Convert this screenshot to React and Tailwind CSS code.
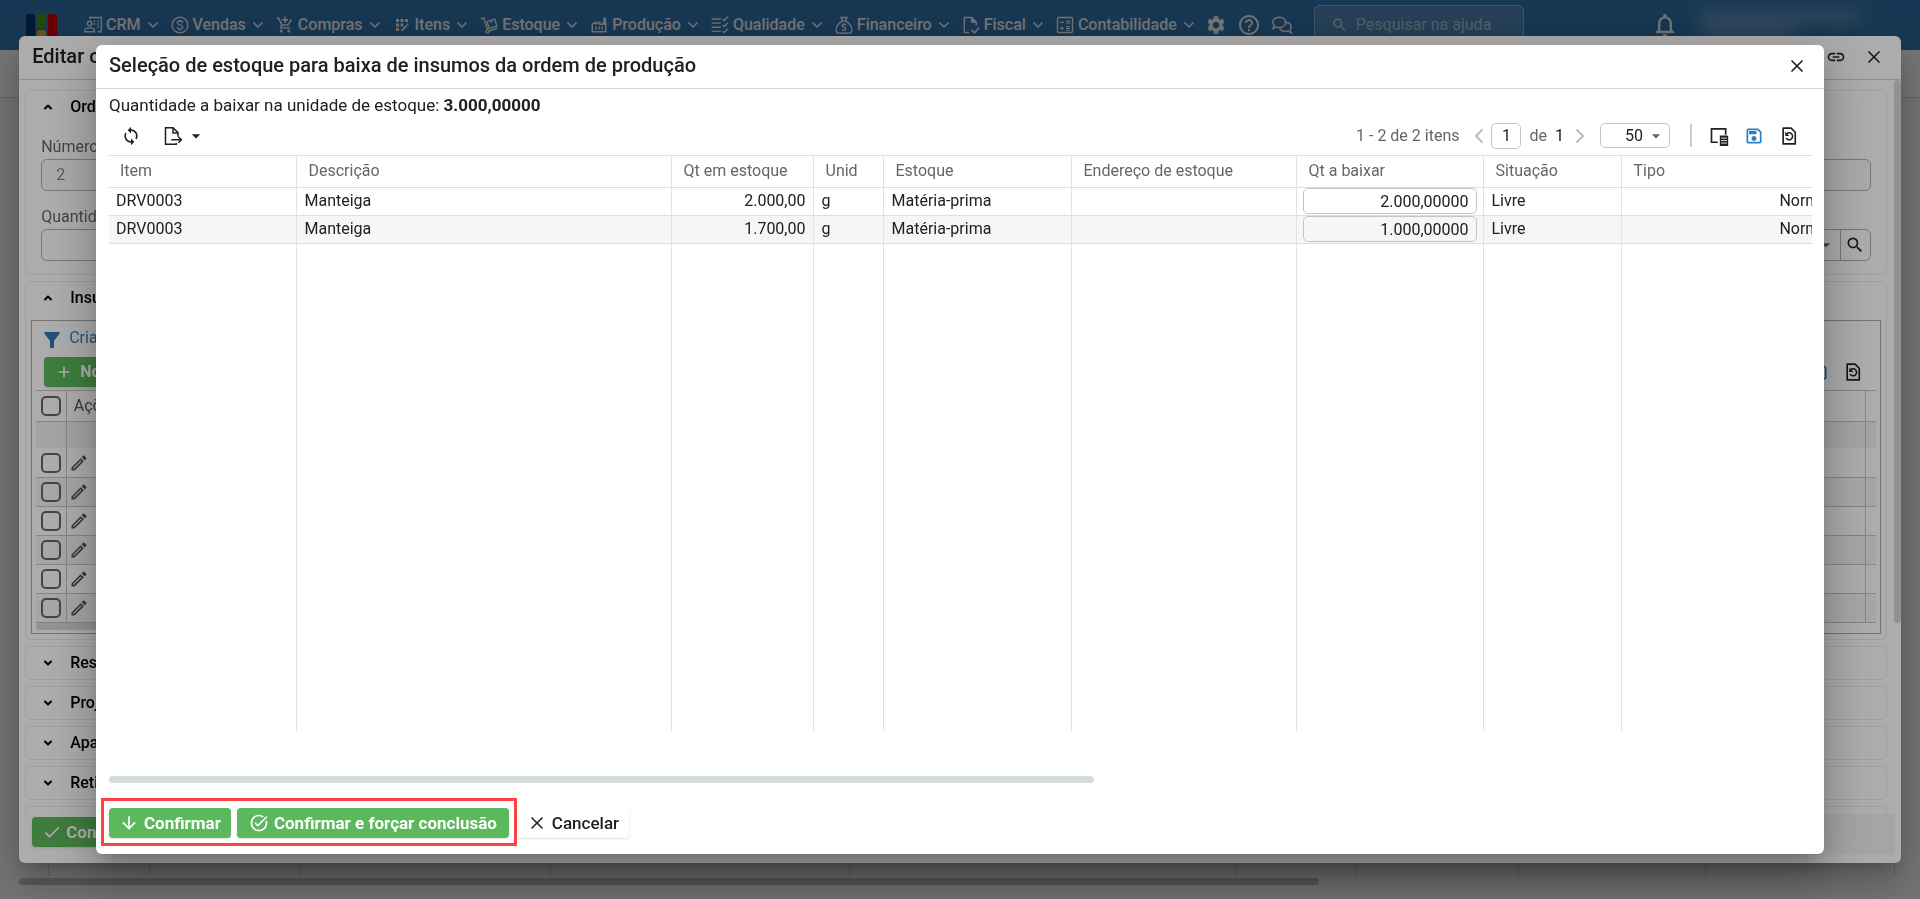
import React from 'react';
import { ChevronDown, ChevronLeft, ChevronRight, ChevronUp, Plus, X } from 'lucide-react';
import {
  MdAppRegistration,
  MdArrowDownward,
  MdArrowDropDown,
  MdCheck,
  MdFilterAlt,
  MdHelpOutline,
  MdLink,
  MdOutlineAddShoppingCart,
  MdOutlineEdit,
  MdOutlineFactory,
  MdOutlineNotifications,
  MdOutlineSave,
  MdSearch,
  MdSettings,
  MdSync,
  MdTaskAlt,
} from 'react-icons/md';

// Icons that are not in the icon packages
const Svg = ({ children, className = 'size-[18px]', width = 1.8 }) => (
  <svg
    viewBox="0 0 24 24"
    className={className}
    fill="none"
    stroke="currentColor"
    strokeWidth={width}
    aria-hidden="true"
  >
    {children}
  </svg>
);

const CrmIcon = () => (
  <Svg>
    <circle cx="7.5" cy="10" r="3" />
    <path d="M1 21v-2.2c0-2 4-3 6.500-3s6.500 1 6.500 3V21z" />
    <path d="M8 4V2h15v19h-5" />
    <path d="M13 6.500h2M17.500 6.500h2M13 10.500h2M17.500 10.500h2M17.500 14.500h2" strokeWidth="2" />
  </Svg>
);

const SalesIcon = () => (
  <Svg>
    <circle cx="12" cy="12" r="10.500" />
    <path d="M15.500 9c0-1.500-1.500-2.300-3.500-2.300S8.500 7.600 8.500 9.300c0 3.600 7 1.700 7 5.200 0 1.800-1.500 2.700-3.500 2.700s-3.500-.9-3.500-2.600M12 4.500v2.200M12 17.200v2.300" />
  </Svg>
);

const StockIcon = () => (
  <Svg>
    <path d="M1 4l4-1.500 5 15.500" />
    <circle cx="10" cy="20.500" r="2" />
    <path d="M12 20l11-3.500" />
    <path d="M9.500 7.500l10-3.500 3 9.500-10 3.500zM14.500 6l1 3" />
  </Svg>
);

const QualityIcon = () => (
  <Svg>
    <path d="M1 4h12M1 9.500h12M1 15h12M1 20.500h12" />
    <path d="M15.500 4l2 2L22.500 1M15.500 12l2 2 5-5M15.500 20l2 2 5-5" />
  </Svg>
);

const MoneyIcon = () => (
  <Svg>
    <path d="M8 2h8l-2 4.500h-4zM10 6.500C5 9.500 1.500 14 1.500 18.500c0 3 1.500 4.500 4.500 4.500h12c3 0 4.500-1.500 4.500-4.500 0-4.500-3.500-9-8.500-12" />
    <path d="M14.500 12.500c-.5-.9-1.300-1.200-2.500-1.200-1.400 0-2.500.7-2.500 1.900 0 2.500 5 1.300 5 3.800 0 1.200-1.100 1.900-2.500 1.900-1.300 0-2.200-.4-2.600-1.400M12 9.800v1.500M12 18.900v1.500" />
  </Svg>
);

const FiscalIcon = () => (
  <Svg>
    <path d="M9.500 22H3V2h10l6 6v5" />
    <path d="M13 2v6h6" fill="currentColor" />
    <path d="M12.500 18.500l4 4L23 15.500" strokeWidth="2.2" />
  </Svg>
);

const AccountingIcon = () => (
  <Svg>
    <rect x="2" y="2" width="20" height="20" rx="1.500" />
    <path d="M5.500 8.500h5M14 6l4.500 4.500M18.500 6L14 10.500M5.500 16.500h5M8 14v5M13.500 14h5M13.500 16.500h5M13.500 19h5" strokeWidth="1.6" />
  </Svg>
);

const ChatIcon = () => (
  <Svg className="size-[22px]" width={1.6}>
    <path d="M9 3.500c-4 0-7 2.400-7 5.500 0 1.500.6 2.700 1.600 3.700L2 16l4-1.700c1 .3 2 .4 3 .4 4 0 7-2.400 7-5.700s-3-5.500-7-5.500z" />
    <path d="M9.500 15c.8 2.500 3.200 4 6 4 1 0 2-.2 2.800-.5L22 20.500l-1.300-3c.8-.9 1.300-2 1.300-3.300 0-2.700-2.500-4.900-6-5.200" />
  </Svg>
);

const ExportIcon = () => (
  <Svg className="size-5">
    <path d="M16 20.500v1.500H3V2h9l6 6v5" />
    <path d="M12 2v6.500h6" />
    <path d="M10 16.500h12M18.500 13l3.500 3.500-3.500 3.500" />
  </Svg>
);

const ColumnsIcon = () => (
  <Svg className="size-5" width={2}>
    <path d="M10.500 19.500H3V3.500h17v7" />
    <path d="M13 11.500h9l1 1V24H13z" fill="currentColor" stroke="none" />
    <path d="M14.500 14.500h7M14.500 17.500h7M14.500 20.500h7" stroke="#fff" strokeWidth="1" />
  </Svg>
);

const RestoreIcon = () => (
  <Svg className="size-5" width={2}>
    <path d="M5 2.500h9.500L19.500 7.500V21.500H5z" strokeLinejoin="round" />
    <path d="M9 9.500a4.200 4.200 0 1 1-.5 5" strokeWidth="1.8" />
    <path d="M7.500 7v5h5z" fill="currentColor" stroke="none" />
  </Svg>
);

const menu = [
  { label: 'CRM', icon: <CrmIcon /> },
  { label: 'Vendas', icon: <SalesIcon /> },
  { label: 'Compras', icon: <MdOutlineAddShoppingCart className="size-[18px]" /> },
  { label: 'Itens', icon: <MdAppRegistration className="size-[18px]" /> },
  { label: 'Estoque', icon: <StockIcon /> },
  { label: 'Produção', icon: <MdOutlineFactory className="size-[18px]" /> },
  { label: 'Qualidade', icon: <QualityIcon /> },
  { label: 'Financeiro', icon: <MoneyIcon /> },
  { label: 'Fiscal', icon: <FiscalIcon /> },
  { label: 'Contabilidade', icon: <AccountingIcon /> },
];

const TopBar = () => (
  <header className="flex h-[50px] items-center bg-[#337ab7] pl-[26px] text-white shadow-md">
    <a href="#inicio" aria-label="Início" className="mt-[6px] flex h-7 gap-[2px]">
      <span className="w-[9px] rounded-[2px] bg-[#003a75]" />
      <span className="flex w-[9px] flex-col gap-[2px]">
        <span className="h-[14px] rounded-[2px] bg-[#4ca80f]" />
        <span className="flex-1 rounded-[2px] bg-[#f5b52a]" />
      </span>
      <span className="w-[9px] rounded-[2px] bg-[#e60000]" />
    </a>
    <nav className="ml-[27px] flex items-center gap-[10px]">
      {menu.map((item) => (
        <button key={item.label} type="button" className="flex items-center gap-1 font-medium">
          {item.icon}
          {item.label}
          <ChevronDown className="size-4" strokeWidth={2.5} />
        </button>
      ))}
    </nav>
    <div className="ml-2 flex items-center gap-[10px]">
      <button type="button" aria-label="Configurações"><MdSettings className="size-[22px]" /></button>
      <button type="button" aria-label="Ajuda"><MdHelpOutline className="size-6" /></button>
      <button type="button" aria-label="Conversas"><ChatIcon /></button>
    </div>
    <div className="ml-[21px] flex h-10 w-[210px] items-center gap-2 rounded-md border border-white/40 bg-white/15 px-4">
      <MdSearch className="size-5 opacity-70" />
      <input
        type="text"
        aria-label="Pesquisar na ajuda"
        placeholder="Pesquisar na ajuda"
        className="w-full bg-transparent placeholder:text-white/60"
      />
    </div>
    <div className="mr-[60px] ml-auto flex items-center gap-[21px]">
      <button type="button" aria-label="Notificações"><MdOutlineNotifications className="size-7" /></button>
      <div className="flex w-[160px] flex-col gap-1 opacity-30 blur-sm">
        <span className="h-3 rounded bg-white" />
        <span className="h-3 w-24 rounded bg-white" />
      </div>
    </div>
  </header>
);

const Background = () => (
  <div className="flex h-screen flex-col overflow-hidden bg-[#fcfcfc]">
    <TopBar />
    <div className="h-12 border-b border-gray-300 bg-white" />
    <div className="mr-[25px] ml-[48px] grid flex-1 grid-cols-[101px_151px_250px_299px_387px_119px_163px_187px_1fr] divide-x divide-gray-300 overflow-hidden border-x border-gray-300">
      {[1, 2, 3, 4, 5, 6, 7, 8, 9].map((n) => (
        <div key={n} />
      ))}
    </div>
    <div className="mt-[2px] mb-[14px] ml-[19px] h-[7px] w-[1300px] max-w-full rounded-sm bg-[#bec5ca]" />
  </div>
);

const Backdrop = ({ children }) => (
  <div className="fixed inset-0 flex items-center justify-center bg-black/32">{children}</div>
);

const Dialog = ({ title, className, actions, children }) => (
  <section
    role="dialog"
    aria-label={title}
    className={`flex flex-col overflow-hidden rounded-md shadow-[0_11px_15px_-7px_rgba(0,0,0,0.2),0_24px_38px_3px_rgba(0,0,0,0.14),0_9px_46px_8px_rgba(0,0,0,0.12)] ${className}`}
  >
    <div className="flex h-11 shrink-0 items-center justify-between border-b border-gray-300 px-[13px]">
      <h2 className="-mt-[2px] text-xl font-medium">{title}</h2>
      <div className="flex items-center gap-[18px]">
        {actions}
        <button type="button" aria-label="Fechar" className="pr-1">
          <X className="size-5" strokeWidth={2} />
        </button>
      </div>
    </div>
    {children}
  </section>
);

const Card = ({ title, open = false, children }) => (
  <div className="shrink-0 rounded-md border border-[#ebebeb]">
    <button type="button" className="flex h-8 w-full items-center gap-4 pl-4 font-medium text-black">
      {open ? <ChevronUp className="size-3" strokeWidth={4} /> : <ChevronDown className="size-3" strokeWidth={4} />}
      {title}
    </button>
    {children}
  </div>
);

const suppliesRows = [1, 2, 3, 4, 5, 6];

const SuppliesTable = () => (
  <table className="w-full table-fixed border-collapse">
    <thead>
      <tr className="h-[31px] border-y border-[#c4c4c4] text-left text-[#555]">
        <th className="w-[30px] p-0">
          <input type="checkbox" aria-label="Selecionar todos" className="mx-auto block size-5 appearance-none rounded-[5px] border-2 border-[#666]" />
        </th>
        <th className="border-l border-[#c4c4c4] px-[7px] font-normal">Ações</th>
        <th className="w-[10px] border-l border-[#c4c4c4]" />
      </tr>
      <tr className="h-[27px] bg-[#f2f2f2]">
        <td />
        <td className="border-l border-[#c4c4c4]" />
        <td className="border-l border-[#c4c4c4]" />
      </tr>
    </thead>
    <tbody>
      {suppliesRows.map((n) => (
        <tr key={n} className="h-[29px] border-b border-[#c4c4c4] even:bg-[#f5f5f5]">
          <td className="p-0">
            <input type="checkbox" aria-label={`Selecionar linha ${n}`} className="mx-auto block size-5 appearance-none rounded-[5px] border-2 border-[#666]" />
          </td>
          <td className="border-l border-[#c4c4c4] py-0 pl-[2px]">
            <button type="button" aria-label="Editar" className="block text-[#555]">
              <MdOutlineEdit className="size-5" />
            </button>
          </td>
          <td className="border-l border-[#c4c4c4]" />
        </tr>
      ))}
    </tbody>
  </table>
);

const OrderDialog = () => (
  <Dialog
    title="Editar ordem de produção"
    className="h-[92vh] w-[98vw] bg-[#fefefe] text-[#212121]"
    actions={<button type="button" aria-label="Copiar link"><MdLink className="size-5" /></button>}
  >
    <div className="flex min-h-0 flex-1">
      <div className="flex min-h-0 flex-1 flex-col gap-[6px] overflow-hidden pt-[10px] pr-[7px] pl-[6px]">
        <Card title="Ordem de produção" open>
          <div className="flex flex-col px-[15px] pt-3 pb-[13px]">
            <label htmlFor="numero" className="text-[#666]">Número</label>
            <input
              id="numero"
              type="text"
              defaultValue="2"
              disabled
              className="mb-[14px] h-8 rounded-md border border-[#b0b0b0] bg-[#fafafa] px-[14px] text-[#888]"
            />
            <label htmlFor="quantidade" className="text-[#666]">Quantidade</label>
            <div className="flex h-8 items-center rounded-md border border-[#b0b0b0]">
              <input id="quantidade" type="text" className="h-full flex-1 px-[14px]" />
              <MdArrowDropDown className="mr-1 size-5 text-[#666]" />
              <button type="button" aria-label="Pesquisar" className="flex h-full w-[30px] items-center justify-center border-l border-[#b0b0b0]">
                <MdSearch className="size-5" />
              </button>
            </div>
          </div>
        </Card>

        <Card title="Insumos" open>
          <div className="mx-[5px] mt-[6px] mb-[5px] border border-[#aaa] px-1 pb-[3px]">
            <div className="flex h-9 items-center gap-[5px] pb-[2px] pl-1 text-[#337ab7]">
              <MdFilterAlt className="mt-1 size-6" />
              <a href="#filtro">Criar filtro</a>
            </div>
            <div className="flex items-center justify-between pb-[3px] pl-2">
              <button type="button" className="flex h-[30px] items-center gap-2 rounded bg-[#5cb85c] px-3 font-bold text-white shadow">
                <Plus className="size-4" strokeWidth={2.5} />
                Novo
              </button>
              <div className="flex gap-[14px] pr-[13px]">
                <button type="button" aria-label="Salvar" className="text-[#337ab7]"><MdOutlineSave className="size-5" /></button>
                <button type="button" aria-label="Restaurar"><RestoreIcon /></button>
              </div>
            </div>
            <SuppliesTable />
            <div className="h-[7px] w-1/2 rounded-sm bg-[#d5dadd]" />
          </div>
        </Card>

        <Card title="Resultados" />
        <Card title="Projetos" />
        <Card title="Aparas" />
        <Card title="Retiradas" />
        <Card title="Serviços" />
      </div>
      <div className="w-[7px]">
        <div className="h-[74%] rounded-sm bg-[#d3d9de]" />
      </div>
    </div>
    <div className="flex h-[49px] shrink-0 justify-between pr-[6px] pb-2 pl-[13px]">
      <button type="button" className="mt-[3px] flex h-[30px] items-center gap-1 rounded bg-[#5cb85c] px-[10px] text-[17px] font-bold text-white shadow">
        <MdCheck className="size-5" />
        Concluir
      </button>
      <div className="w-[78px] bg-[#f3f3f3]" />
    </div>
  </Dialog>
);

const stockRows = [
  { id: 1, item: 'DRV0003', descricao: 'Manteiga', qtEstoque: '2.000,00', unid: 'g', estoque: 'Matéria-prima', endereco: '', qtBaixar: '2.000,00000', situacao: 'Livre', tipo: 'Normal' },
  { id: 2, item: 'DRV0003', descricao: 'Manteiga', qtEstoque: '1.700,00', unid: 'g', estoque: 'Matéria-prima', endereco: '', qtBaixar: '1.000,00000', situacao: 'Livre', tipo: 'Normal' },
];

const cell = 'px-[7px] py-0 not-first:pl-2';

const StockTable = () => (
  <table className="h-full w-[1730px] table-fixed border-collapse border-t border-[#dedede]">
    <colgroup>
      <col className="w-[187px]" />
      <col className="w-[375px]" />
      <col className="w-[142px]" />
      <col className="w-[70px]" />
      <col className="w-[188px]" />
      <col className="w-[225px]" />
      <col className="w-[187px]" />
      <col className="w-[138px]" />
      <col />
    </colgroup>
    <thead>
      <tr className="h-8 divide-x divide-[#e2e2e2] border-b border-[#dedede] text-left text-[#666]">
        {['Item', 'Descrição', 'Qt em estoque', 'Unid', 'Estoque', 'Endereço de estoque', 'Qt a baixar', 'Situação', 'Tipo'].map((title) => (
          <th key={title} className="px-[11px] py-0 font-normal not-first:pl-3">{title}</th>
        ))}
      </tr>
    </thead>
    <tbody>
      {stockRows.map((row) => (
        <tr key={row.id} className="h-7 divide-x divide-[#e2e2e2] border-b border-[#dedede] even:bg-[#f6f6f6]">
          <td className={cell}>{row.item}</td>
          <td className={cell}>{row.descricao}</td>
          <td className={`${cell} text-right`}>{row.qtEstoque}</td>
          <td className={cell}>{row.unid}</td>
          <td className={cell}>{row.estoque}</td>
          <td className={cell}>{row.endereco}</td>
          <td className="px-[6px] py-0">
            <input
              type="text"
              aria-label="Qt a baixar"
              defaultValue={row.qtBaixar}
              className="block h-[26px] w-full rounded-[5px] border border-[#c4c4c4] bg-transparent px-[7px] text-right"
            />
          </td>
          <td className={cell}>{row.situacao}</td>
          <td className={`${cell} text-right`}>{row.tipo}</td>
        </tr>
      ))}
      {/* empty area keeps the column lines down to the bottom */}
      <tr className="divide-x divide-[#e2e2e2]">
        {[1, 2, 3, 4, 5, 6, 7, 8, 9].map((n) => (
          <td key={n} />
        ))}
      </tr>
    </tbody>
  </table>
);

const Pager = () => (
  <div className="flex items-center text-[#666]">
    <span>1 - 2 de 2 itens</span>
    <button type="button" aria-label="Página anterior" className="ml-2 text-[#bbb]"><ChevronLeft className="size-6" /></button>
    <input
      type="text"
      aria-label="Página"
      defaultValue="1"
      className="h-[26px] w-[30px] rounded-[5px] border border-[#c4c4c4] text-center text-[#212121]"
    />
    <span className="ml-2">de</span>
    <span className="ml-2 text-[#212121]">1</span>
    <button type="button" aria-label="Próxima página" className="ml-1 text-[#bbb]"><ChevronRight className="size-6" /></button>
    <div className="relative ml-2">
      <select aria-label="Itens por página" className="h-[25px] w-[70px] appearance-none rounded-[5px] border border-[#c4c4c4] pl-6 text-[#212121]">
        <option>50</option>
      </select>
      <MdArrowDropDown className="pointer-events-none absolute top-[3px] right-1 size-5" />
    </div>
    <span className="ml-5 h-[23px] w-[2px] bg-[#ccc]" />
    <div className="flex items-center gap-[15px] pr-[13px] pl-[17px] text-[#212121]">
      <button type="button" aria-label="Colunas"><ColumnsIcon /></button>
      <button type="button" aria-label="Salvar" className="text-[#2f7fc6]"><MdOutlineSave className="size-5" /></button>
      <button type="button" aria-label="Restaurar"><RestoreIcon /></button>
    </div>
  </div>
);

const StockDialog = () => (
  <Dialog
    title="Seleção de estoque para baixa de insumos da ordem de produção"
    className="h-[90vh] w-[90vw] bg-white text-[#212121]"
  >
    <div className="flex min-h-0 flex-1 flex-col px-3 pl-[13px]">
      <p className="mt-1 text-[17px]">
        Quantidade a baixar na unidade de estoque: <strong>3.000,00000</strong>
      </p>
      <div className="flex h-[38px] shrink-0 items-center justify-between">
        <div className="flex items-center gap-[22px] pl-3">
          <button type="button" aria-label="Atualizar"><MdSync className="size-5" /></button>
          <button type="button" aria-label="Exportar" className="flex items-center gap-[3px]">
            <ExportIcon />
            <MdArrowDropDown className="size-5" />
          </button>
        </div>
        <Pager />
      </div>
      <div className="min-h-0 flex-1 overflow-hidden">
        <StockTable />
      </div>
      <div className="mt-[45px] h-[7px] w-[985px] max-w-full shrink-0 rounded-sm bg-[#d5dadd]" />
    </div>
    <div className="flex shrink-0 pt-[15px] pb-2 pl-[5px] text-[17px]">
      <div className="flex gap-[6px] border-3 border-[#fb4345] px-[5px] pt-[7px] pb-[5px]">
        <button type="button" className="flex h-[30px] items-center gap-[5px] rounded bg-[#5cb85c] px-[10px] font-bold text-white shadow">
          <MdArrowDownward className="size-5" />
          Confirmar
        </button>
        <button type="button" className="flex h-[30px] items-center gap-[5px] rounded bg-[#5cb85c] px-3 font-bold text-white shadow">
          <MdTaskAlt className="size-5" />
          Confirmar e forçar conclusão
        </button>
      </div>
      <button type="button" className="mt-[10px] flex h-[30px] items-center gap-[5px] rounded bg-white px-[10px] font-medium shadow">
        <X className="size-5" strokeWidth={2} />
        Cancelar
      </button>
    </div>
  </Dialog>
);

const App = () => (
  <div className="font-['Roboto','Liberation_Sans',sans-serif] text-base leading-6">
    <Background />
    <Backdrop>
      <OrderDialog />
    </Backdrop>
    <Backdrop>
      <StockDialog />
    </Backdrop>
  </div>
);

export default App;
